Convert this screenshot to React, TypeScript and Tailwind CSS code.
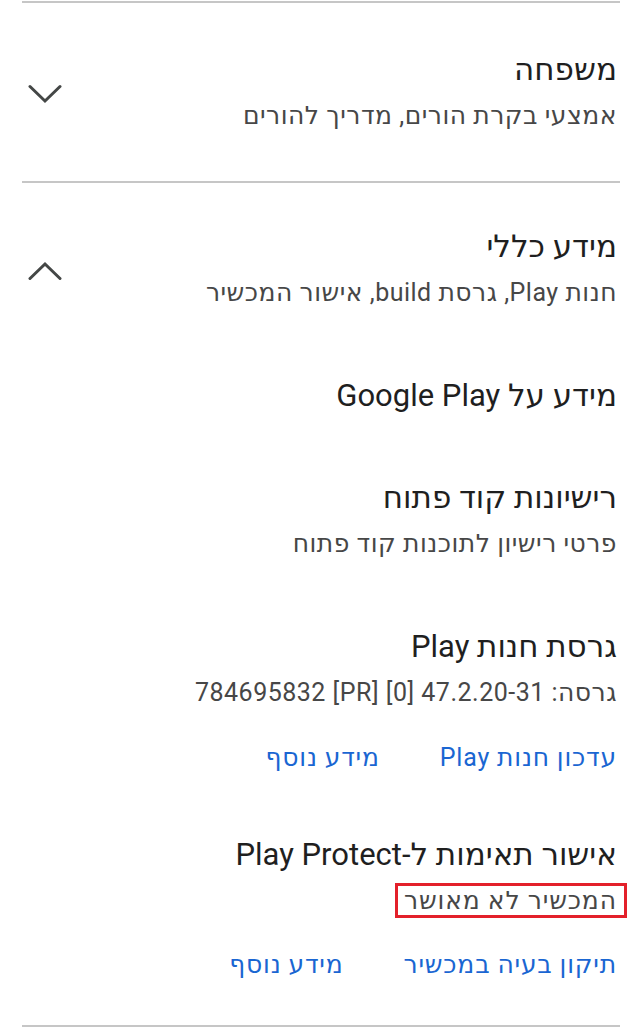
import React from "react";

const font = { fontFamily: 'Roboto, "DejaVu Sans", sans-serif' };

function Chevron({ up }: { up?: boolean }) {
  return (
    <svg width="34" height="20" viewBox="0 0 34 20" fill="none">
      <polyline
        points={up ? "2,17.5 17,3 32,17.5" : "2,2.5 17,17 32,2.5"}
        stroke="#444746"
        strokeWidth="3"
        strokeLinecap="round"
        strokeLinejoin="miter"
      />
    </svg>
  );
}

function Divider() {
  return <div className="h-[2px] bg-[#c6c6c6] ml-[22px] mr-[20px]" />;
}

function Title({ children }: { children: React.ReactNode }) {
  return <div className="text-[31px] leading-[44px] text-[#1f1f1f]">{children}</div>;
}

function Sub({ children }: { children: React.ReactNode }) {
  return <div className="text-[25px] leading-[48px] tracking-[0.5px] text-[#474747]">{children}</div>;
}

function Links({ a, b }: { a: string; b: string }) {
  return (
    <div className="flex gap-[60px] text-[25px] leading-[44px] tracking-[0.8px] text-[#1a66d2]">
      <span>{a}</span>
      <span>{b}</span>
    </div>
  );
}

export default function App() {
  return (
    <div dir="rtl" style={font} className="w-[640px] h-[1031px] bg-white overflow-hidden pt-[1px]">
      <Divider />
      <div className="flex items-center pr-[23px] pl-[28px] pt-[45px] pb-[41px]">
        <div className="flex-1">
          <Title>משפחה</Title>
          <Sub>אמצעי בקרת הורים, מדריך להורים</Sub>
        </div>
        <Chevron />
      </div>
      <Divider />
      <div className="pr-[23px] pl-[28px]">
        <div className="flex items-center pt-[42px]">
          <div className="flex-1">
            <Title>מידע כללי</Title>
            <Sub>חנות Play, גרסת build, אישור המכשיר</Sub>
          </div>
          <Chevron up />
        </div>
        <div className="mt-[57px]">
          <Title>מידע על Google Play</Title>
        </div>
        <div className="mt-[58px]">
          <Title>רישיונות קוד פתוח</Title>
          <Sub>פרטי רישיון לתוכנות קוד פתוח</Sub>
        </div>
        <div className="mt-[57px]">
          <Title>גרסת חנות Play</Title>
          <Sub>גרסה: 47.2.20-31 [0] [PR] 784695832</Sub>
        </div>
        <div className="mt-[19px]">
          <Links a="עדכון חנות Play" b="מידע נוסף" />
        </div>
        <div className="mt-[53px]">
          <Title>אישור תאימות ל-Play Protect</Title>
          <div className="flex">
            <div className="border-[3px] border-[#e3202a] -mr-[10px] pr-[7px] pl-[6px] leading-[29px] text-[25px] tracking-[0.9px] text-[#474747] mt-[6px] mb-[7px]">
              המכשיר לא מאושר
            </div>
          </div>
        </div>
        <div className="mt-[18px]">
          <Links a="תיקון בעיה במכשיר" b="מידע נוסף" />
        </div>
      </div>
      <div className="mt-[38px]">
        <Divider />
      </div>
    </div>
  );
}
